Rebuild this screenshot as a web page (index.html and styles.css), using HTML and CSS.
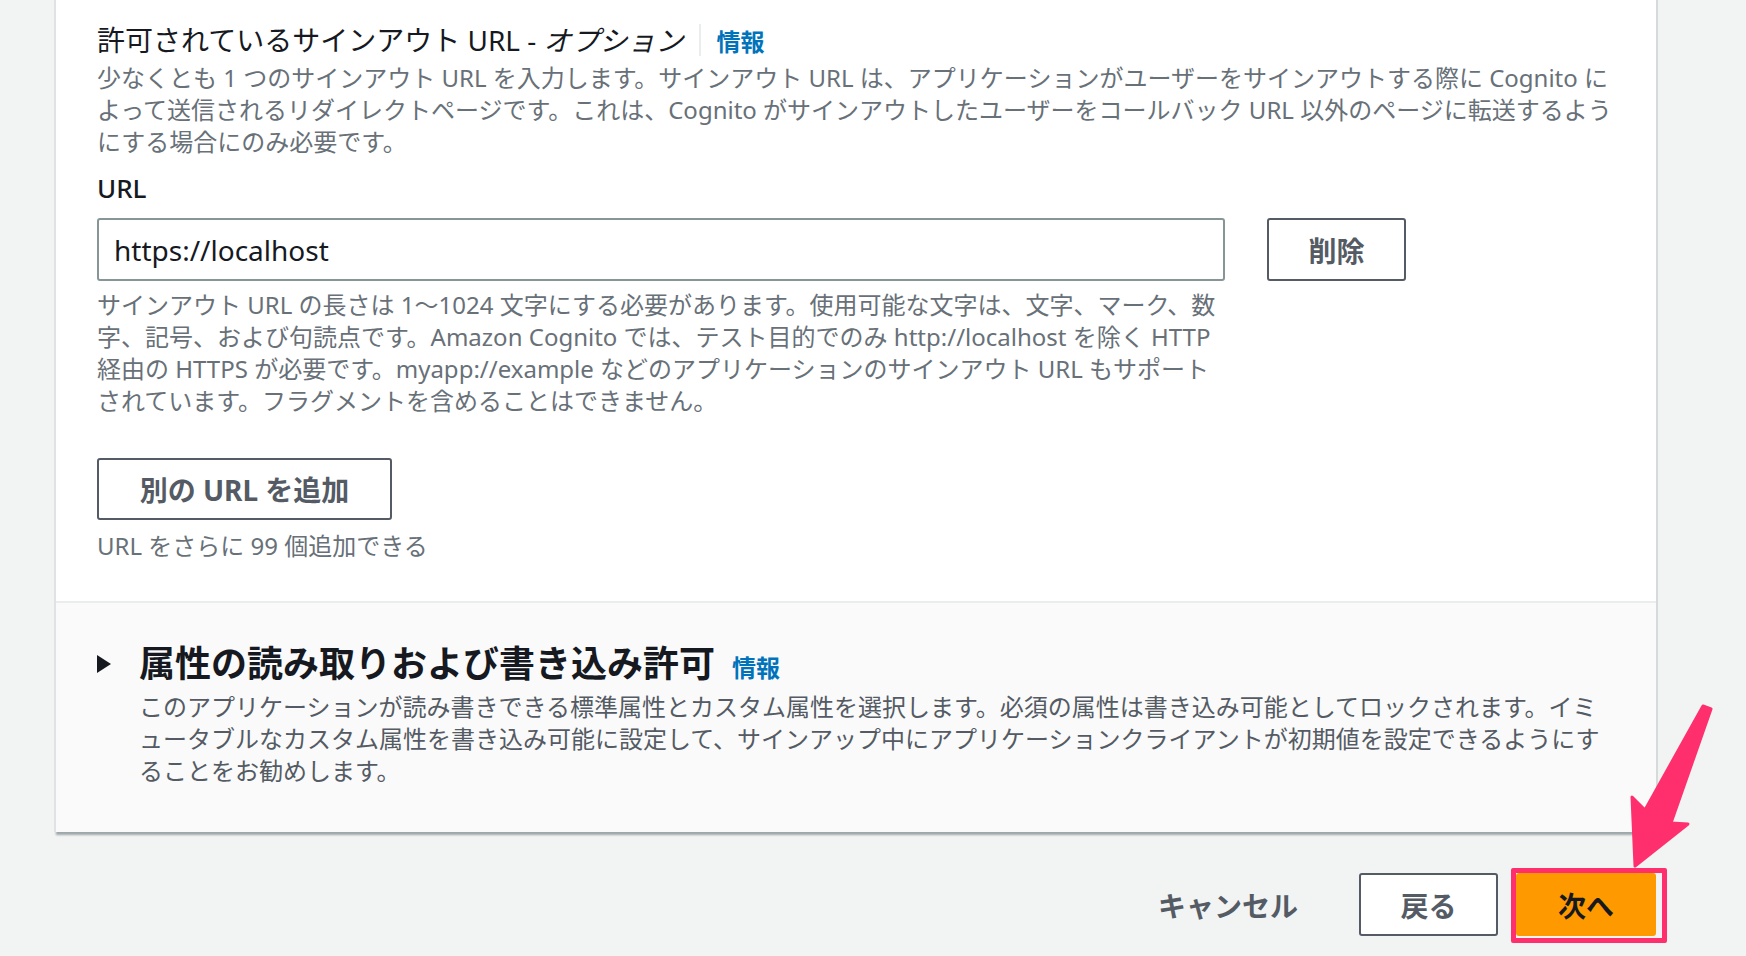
FILE: index.html
```html
<!DOCTYPE html>
<html lang="ja">
<head>
    <meta charset="UTF-8">
    <meta name="viewport" content="width=device-width, initial-scale=1.0">
    <title>アプリケーションクライアント - サインアウト URL</title>
    <link rel="stylesheet" href="styles.css">
</head>
<body>
    <div class="panel">
        <div class="panel-body">
            <div class="field-head">
                <h3 class="field-title">許可されているサインアウト URL - <i>オプション</i></h3>
                <span class="head-divider"></span>
                <a class="info-link" href="#">情報</a>
            </div>
            <p class="description">少なくとも 1 つのサインアウト URL を入力します。サインアウト URL は、アプリケーションがユーザーをサインアウトする際に Cognito によって送信されるリダイレクトページです。これは、Cognito がサインアウトしたユーザーをコールバック URL 以外のページに転送するようにする場合にのみ必要です。</p>

            <label class="field-label" for="signoutUrl">URL</label>
            <div class="url-row">
                <div class="url-field">
                    <input id="signoutUrl" class="text-input" type="text" value="https://localhost">
                    <p class="hint">サインアウト URL の長さは 1～1024 文字にする必要があります。使用可能な文字は、文字、マーク、数字、記号、および句読点です。Amazon Cognito では、テスト目的でのみ http://localhost を除く HTTP 経由の HTTPS が必要です。myapp://example などのアプリケーションのサインアウト URL もサポートされています。フラグメントを含めることはできません。</p>
                </div>
                <button type="button" class="btn delete-btn">削除</button>
            </div>

            <button type="button" class="btn add-btn">別の URL を追加</button>
            <p class="helper">URL をさらに 99 個追加できる</p>
        </div>

        <div class="expand-section">
            <div class="expand-head">
                <svg class="caret" width="14" height="18" viewBox="0 0 14 18">
                    <polygon points="0,0 14,9 0,18" fill="#16191f"/>
                </svg>
                <div class="expand-title">
                    <h2>属性の読み取りおよび書き込み許可</h2>
                    <a class="info-link" href="#">情報</a>
                </div>
            </div>
            <p class="expand-desc">このアプリケーションが読み書きできる標準属性とカスタム属性を選択します。必須の属性は書き込み可能としてロックされます。イミュータブルなカスタム属性を書き込み可能に設定して、サインアップ中にアプリケーションクライアントが初期値を設定できるようにすることをお勧めします。</p>
        </div>
    </div>

    <div class="actions">
        <button type="button" class="btn btn-link">キャンセル</button>
        <button type="button" class="btn back-btn">戻る</button>
        <button type="submit" class="btn btn-primary">次へ</button>
    </div>

    <!-- annotation arrow pointing at the next button -->
    <svg class="arrow" width="100" height="175" viewBox="0 0 100 175">
        <polygon points="83,6 91,9 51,123 68,124 15,166 12,97 25,110"
                 fill="#ff2f6d" stroke="#ff2f6d" stroke-width="3" stroke-linejoin="round"/>
    </svg>
</body>
</html>
```

FILE: styles.css
```css
* {
    margin: 0;
    padding: 0;
    box-sizing: border-box;
}

body {
    font-family: "Noto Sans", "Noto Sans CJK JP", sans-serif;
    background: #f2f3f3;
    color: #16191f;
    position: relative;
    min-height: 956px;
}

.panel {
    margin-left: 56px;
    width: 1600px;
    background: #fff;
    box-shadow: -2px 0 0 #dfe3e4, 2px 0 0 #d5dbdb, 0 3px 2px rgba(0, 28, 36, 0.35);
}

.panel-body {
    padding: 22px 41px 39px;
}

.field-head {
    display: flex;
    align-items: center;
    height: 36px;
}

.field-title {
    font-size: 28px;
    font-weight: 400;
    line-height: 36px;
}

.field-title i {
    font-style: italic;
}

.head-divider {
    width: 2px;
    height: 32px;
    background: #eaeded;
    margin: 0 16px 0 15px;
}

.info-link {
    font-size: 24px;
    font-weight: 700;
    color: #0073bb;
    text-decoration: none;
}

.description {
    margin-top: 4px;
    font-size: 24px;
    line-height: 32px;
    color: #687078;
}

.field-label {
    display: block;
    margin-top: 14px;
    font-size: 26px;
    font-weight: 500;
    line-height: 32px;
}

.url-row {
    display: flex;
    align-items: flex-start;
    gap: 42px;
    margin-top: 14px;
}

.url-field {
    width: 1128px;
}

.text-input {
    width: 100%;
    height: 63px;
    padding: 0 15px;
    border: 2px solid #879596;
    border-radius: 3px;
    font: inherit;
    font-size: 28px;
    color: #16191f;
}

.hint {
    margin-top: 8px;
    font-size: 24px;
    line-height: 32px;
    color: #687078;
}

.btn {
    height: 63px;
    padding: 0 30px;
    border: 2px solid #545b64;
    border-radius: 3px;
    background: #fff;
    color: #545b64;
    font: inherit;
    font-size: 28px;
    font-weight: 700;
    cursor: pointer;
}

.delete-btn {
    width: 139px;
}

.add-btn {
    display: block;
    width: 295px;
    height: 62px;
    margin-top: 41px;
}

.helper {
    margin-top: 10px;
    font-size: 24px;
    line-height: 32px;
    color: #687078;
}

.expand-section {
    background: #fafafa;
    border-top: 2px solid #eaeded;
    padding: 39px 41px 45px;
}

.expand-head {
    display: flex;
    align-items: center;
    gap: 28px;
}

.expand-title {
    display: flex;
    align-items: baseline;
    gap: 17px;
}

.expand-title h2 {
    font-size: 36px;
    font-weight: 700;
    line-height: 44px;
}

.expand-desc {
    margin-top: 5px;
    padding-left: 42px;
    font-size: 24px;
    line-height: 32px;
    color: #545b64;
}

.actions {
    display: flex;
    justify-content: flex-end;
    gap: 18px;
    margin-left: 56px;
    width: 1600px;
    margin-top: 41px;
}

.btn-link {
    border-color: transparent;
    background: transparent;
    padding: 0 41px;
}

.back-btn {
    width: 139px;
    padding: 0;
}

.btn-primary {
    position: relative;
    width: 140px;
    padding: 0;
    background: #ff9900;
    border-color: #ff9900;
    color: #16191f;
}

/* hand-drawn highlight frame round the next button */
.btn-primary::after {
    content: "";
    position: absolute;
    top: -7px;
    left: -7px;
    right: -13px;
    bottom: -9px;
    border: 5px solid #ff2f6d;
    border-radius: 2px;
}

.arrow {
    position: absolute;
    left: 1620px;
    top: 700px;
}
```
